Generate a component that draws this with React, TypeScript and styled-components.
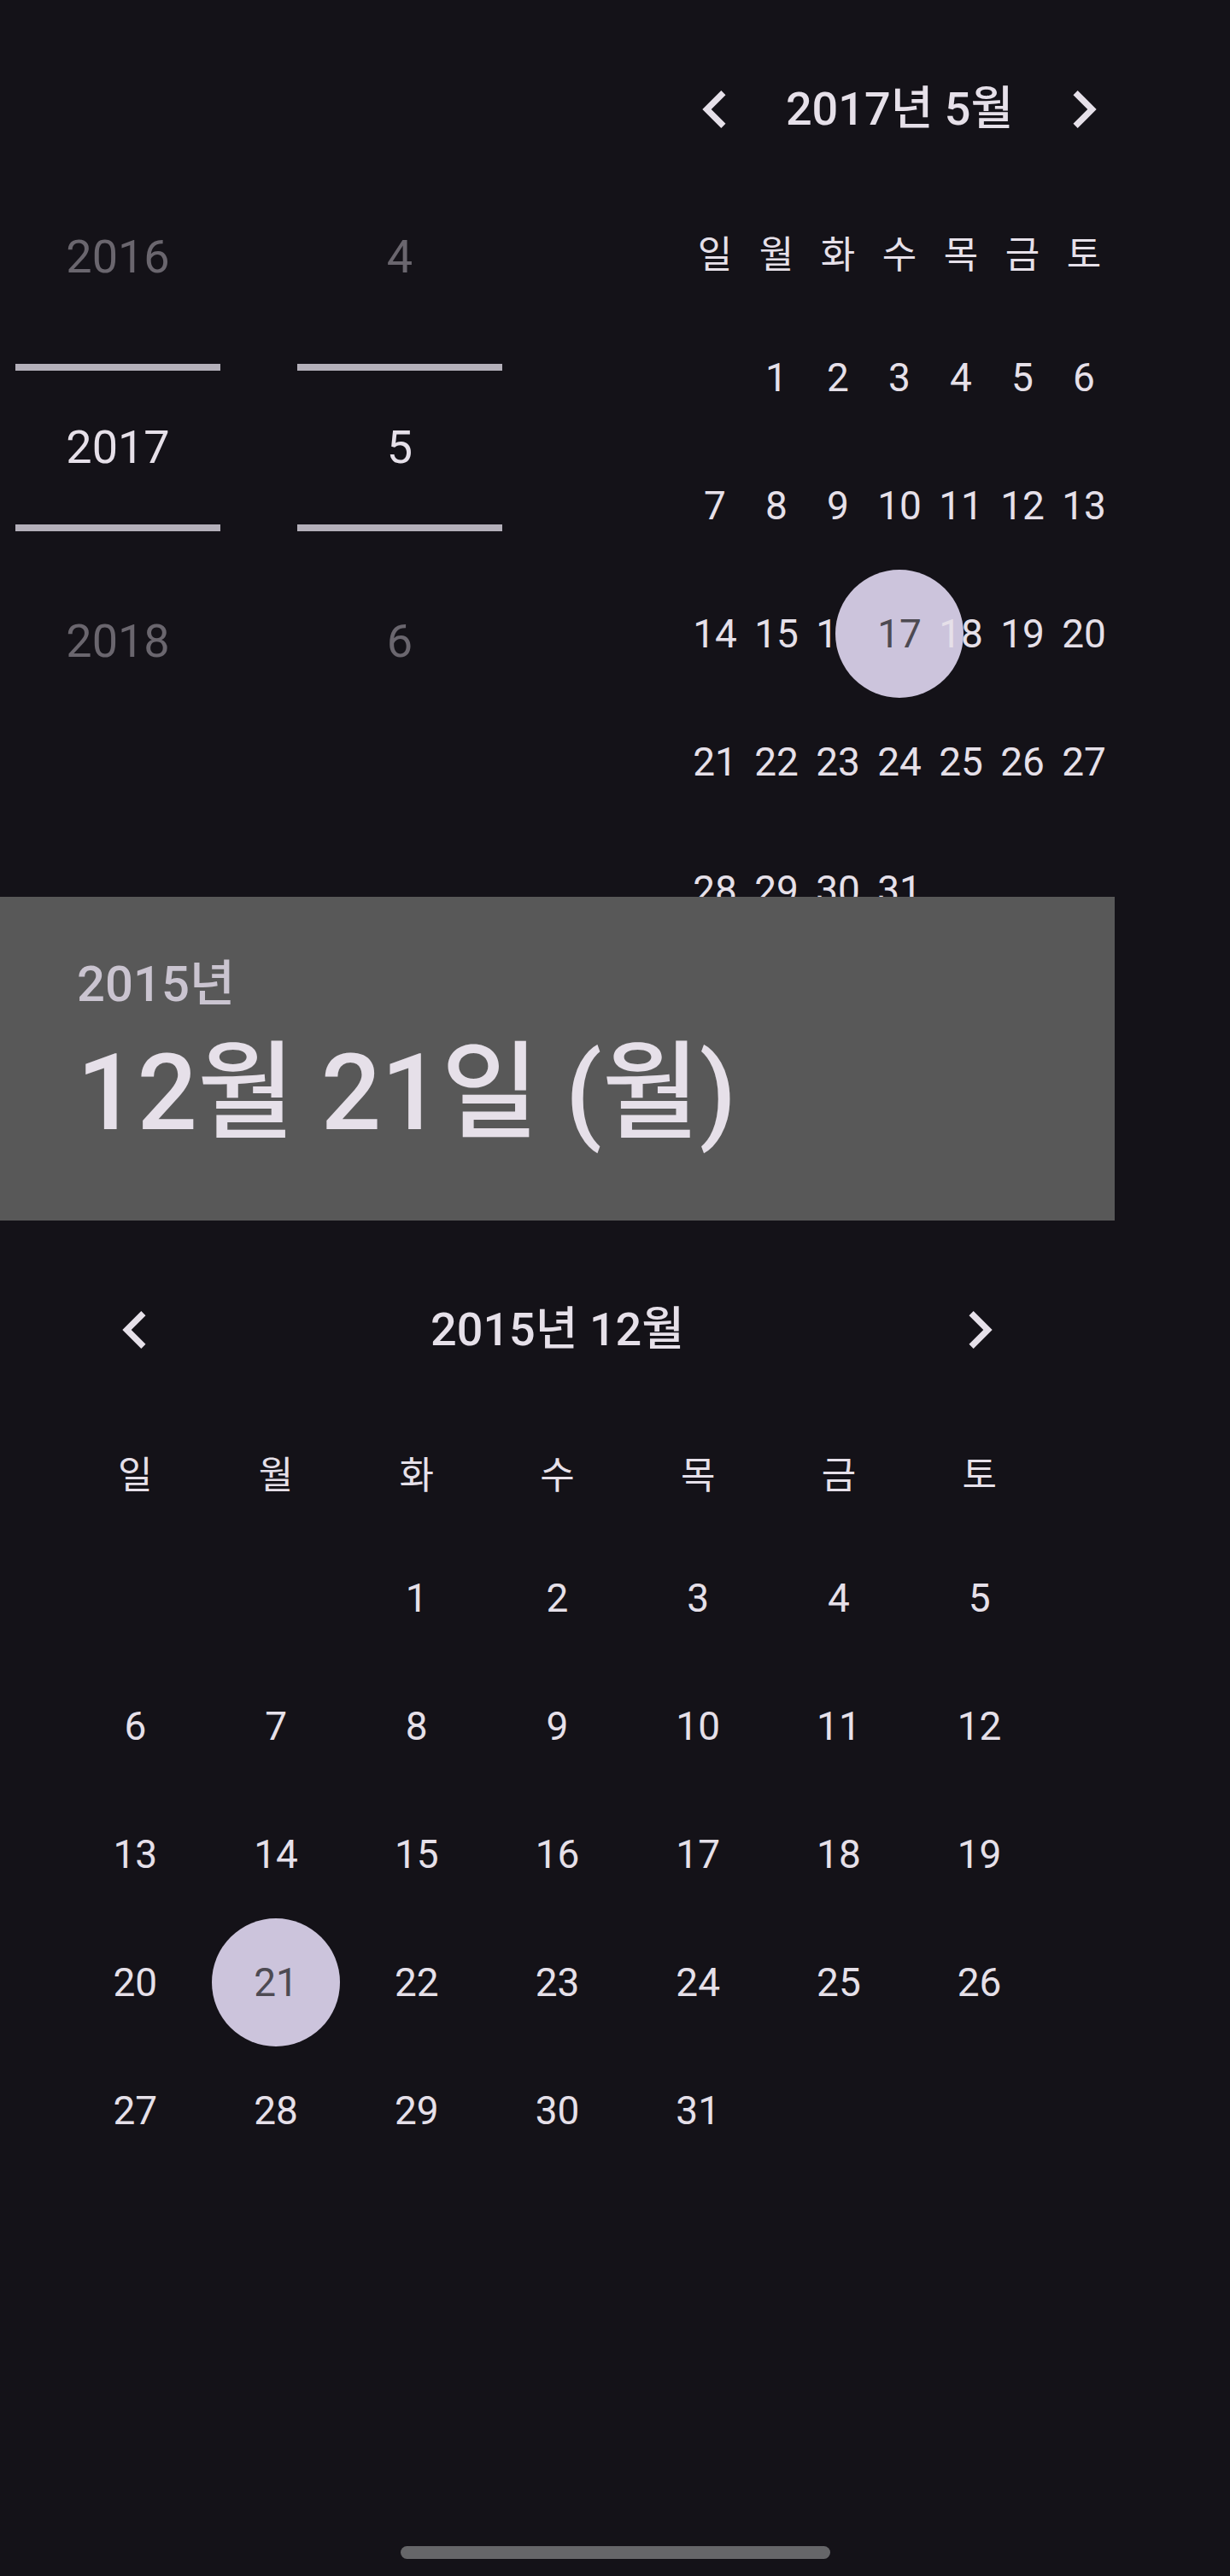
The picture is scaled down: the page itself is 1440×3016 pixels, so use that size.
import React from "react";
import styled, { createGlobalStyle } from "styled-components";

const GlobalStyle = createGlobalStyle`
  html, body {
    margin: 0;
    padding: 0;
    background: #141218;
  }
  body {
    font-family: Roboto, "Noto Sans CJK KR", sans-serif;
    color: #e6e0e9;
  }
`;

const Screen = styled.div`
  width: 1440px;
  height: 3016px;
  display: flex;
  flex-direction: column;
  background: #141218;
  overflow: hidden;
`;

const Content = styled.main`
  width: 1305px;
  display: flex;
  flex-direction: column;
`;

const TopSection = styled.section`
  display: flex;
  align-items: flex-start;
  height: 1050px;
  overflow: hidden;
  flex-shrink: 0;
`;

const Wheels = styled.div`
  display: flex;
  gap: 90px;
  padding: 188px 0 0 18px;
`;

const WheelColumn = styled.div`
  width: 240px;
  display: flex;
  flex-direction: column;
`;

const WheelItem = styled.div`
  height: 225px;
  display: flex;
  align-items: center;
  justify-content: center;
  font-size: 54px;
  line-height: 1;
  color: #6a666e;
`;

const WheelSelected = styled.div`
  height: 196px;
  box-sizing: border-box;
  margin: 13px 0 16px;
  border-top: 8px solid #b4b0ba;
  border-bottom: 8px solid #b4b0ba;
  display: flex;
  align-items: center;
  justify-content: center;
  font-size: 54px;
  line-height: 1;
  color: #e6e0e9;
`;

const CalendarBox = styled.div<{ $width: number; $inset: number }>`
  width: ${(p) => p.$width}px;
  box-sizing: border-box;
  padding: 72px ${(p) => p.$inset}px 0;
  margin-left: auto;
  flex-shrink: 0;
  display: flex;
  flex-direction: column;
  & > * {
    flex-shrink: 0;
  }
`;

const NavRow = styled.div`
  display: grid;
  grid-template-columns: repeat(7, minmax(0, 1fr));
  height: 112px;
  margin-bottom: 47px;
  align-items: center;
`;

const NavButton = styled.button`
  background: none;
  border: 0;
  padding: 0;
  display: flex;
  align-items: center;
  justify-content: center;
  color: #e6e0e9;
  overflow: visible;
  width: 100%;
  height: 100%;
  & > svg {
    flex-shrink: 0;
  }
`;

const Title = styled.div`
  grid-column: 2 / span 5;
  text-align: center;
  font-size: 54px;
  font-weight: 500;
  line-height: 1;
  white-space: nowrap;
`;

const WeekRow = styled.div`
  display: grid;
  grid-template-columns: repeat(7, minmax(0, 1fr));
  height: 136px;
  align-items: center;
`;

const WeekLabel = styled.div`
  text-align: center;
  font-size: 44px;
  line-height: 1;
  white-space: nowrap;
`;

const DayGrid = styled.div`
  display: grid;
  grid-template-columns: repeat(7, minmax(0, 1fr));
  grid-auto-rows: 150px;
`;

const DayCell = styled.div`
  display: flex;
  align-items: center;
  justify-content: center;
  font-size: 46px;
  line-height: 1;
  white-space: nowrap;
  min-width: 0;
`;

const SelectedDay = styled.span`
  flex-shrink: 0;
  width: 150px;
  height: 150px;
  border-radius: 50%;
  background: #ccc4dc;
  color: #4d4a52;
  display: flex;
  align-items: center;
  justify-content: center;
`;

const HeaderPanel = styled.section`
  height: 379px;
  flex-shrink: 0;
  box-sizing: border-box;
  padding: 73px 0 0 90px;
  background: #585858;
  display: flex;
  flex-direction: column;
`;

const HeaderYear = styled.div`
  font-size: 58px;
  font-weight: 500;
  line-height: 1;
  color: #cac4d0;
`;

const HeaderDate = styled.div`
  margin-top: 37px;
  font-size: 124px;
  font-weight: 500;
  line-height: 1;
  color: #e6e0e9;
  white-space: nowrap;
`;

const HomeBar = styled.div`
  width: 503px;
  height: 15px;
  border-radius: 8px;
  background: #666669;
  margin: auto auto 20px;
  flex-shrink: 0;
`;

const Chevron = ({ dir }: { dir: "left" | "right" }) => (
  <svg width="88" height="88" viewBox="0 0 24 24" fill="currentColor">
    {dir === "left" ? (
      <path d="M15.41 7.41L14 6l-6 6 6 6 1.41-1.41L10.83 12z" />
    ) : (
      <path d="M10 6L8.59 7.41 13.17 12l-4.58 4.59L10 18l6-6z" />
    )}
  </svg>
);

const WEEKDAYS = ["일", "월", "화", "수", "목", "금", "토"];

interface CalendarProps {
  title: string;
  offset: number;
  days: number;
  selected: number;
  width: number;
  inset: number;
}

const Calendar = ({ title, offset, days, selected, width, inset }: CalendarProps) => {
  const cells: (number | null)[] = [];
  for (let i = 0; i < offset; i++) cells.push(null);
  for (let d = 1; d <= days; d++) cells.push(d);

  return (
    <CalendarBox $width={width} $inset={inset}>
      <NavRow>
        <NavButton>
          <Chevron dir="left" />
        </NavButton>
        <Title>{title}</Title>
        <NavButton>
          <Chevron dir="right" />
        </NavButton>
      </NavRow>
      <WeekRow>
        {WEEKDAYS.map((w) => (
          <WeekLabel key={w}>{w}</WeekLabel>
        ))}
      </WeekRow>
      <DayGrid>
        {cells.map((d, i) => (
          <DayCell key={i}>
            {d === selected ? <SelectedDay>{d}</SelectedDay> : d}
          </DayCell>
        ))}
      </DayGrid>
    </CalendarBox>
  );
};

const App = () => {
  return (
    <Screen>
      <GlobalStyle />
      <Content>
        <TopSection>
          <Wheels>
            <WheelColumn>
              <WheelItem>2016</WheelItem>
              <WheelSelected>2017</WheelSelected>
              <WheelItem>2018</WheelItem>
            </WheelColumn>
            <WheelColumn>
              <WheelItem>4</WheelItem>
              <WheelSelected>5</WheelSelected>
              <WheelItem>6</WheelItem>
            </WheelColumn>
          </Wheels>
          <Calendar title="2017년 5월" offset={1} days={31} selected={17} width={504} inset={0} />
        </TopSection>
        <HeaderPanel>
          <HeaderYear>2015년</HeaderYear>
          <HeaderDate>12월 21일 (월)</HeaderDate>
        </HeaderPanel>
        <Calendar title="2015년 12월" offset={2} days={31} selected={21} width={1305} inset={76} />
      </Content>
      <HomeBar />
    </Screen>
  );
};

export default App;
